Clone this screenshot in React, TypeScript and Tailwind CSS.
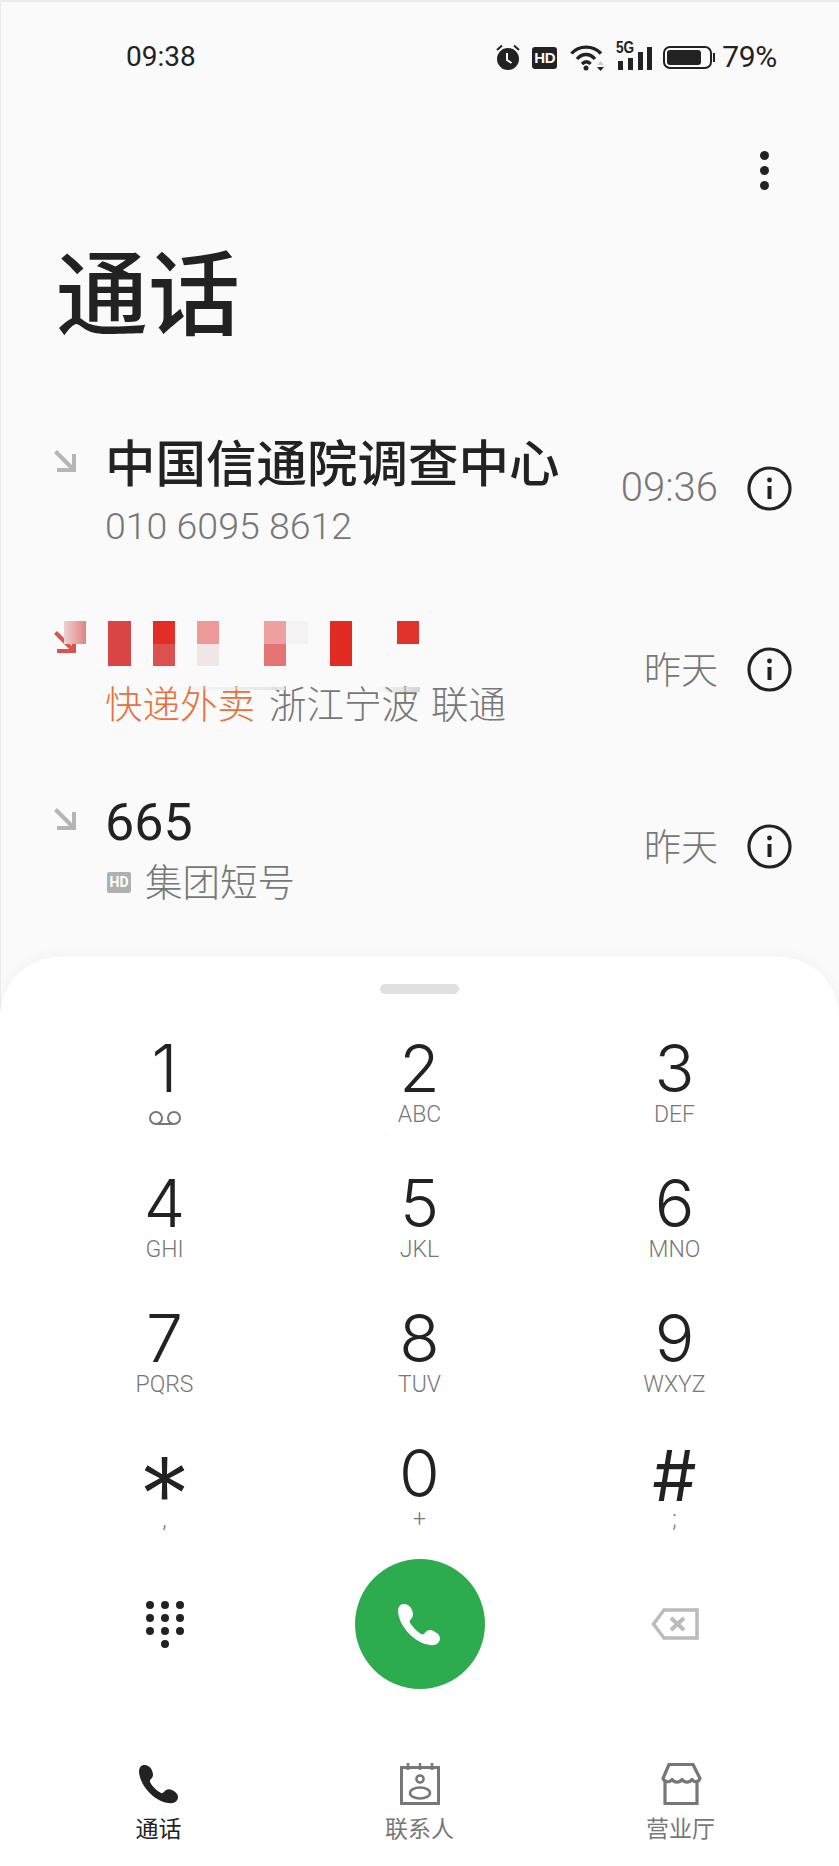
const CJK = "font-['Roboto','Noto_Sans_CJK_SC',sans-serif]";

const PHONE_PATH =
  "M5 1C2 1 0 4 0 8c1 14 16 30 30 31 5 1 9-2 9-6 0-3-2-5-6-7-3-1.500-6-1-8 2-1 1-2 1.500-3 1-4-2-9-7-11-11-.5-1 0-2 1-3 2-2 2.500-4 1.500-7C12 3 9 1 5 1Z";

function Phone({ className }: { className: string }) {
  return (
    <svg viewBox="0 0 40 40" className={className} fill="currentColor">
      <path d={PHONE_PATH} />
    </svg>
  );
}

function CallArrow({ className }: { className: string }) {
  return (
    <svg viewBox="0 0 22 22" className={className} fill="none" stroke="currentColor" strokeWidth="4">
      <path d="M1.500 1.500 19 19" />
      <path d="M20 4v16H3" />
    </svg>
  );
}

function InfoIcon() {
  return (
    <svg viewBox="0 0 45 45" className="w-[45px] h-[45px] text-[#222]" fill="none" stroke="currentColor">
      <circle cx="22.5" cy="22.500" r="20.500" strokeWidth="3.2" />
      <circle cx="22.5" cy="14" r="2.400" fill="currentColor" stroke="none" />
      <path d="M22.5 20v13" strokeWidth="4" />
    </svg>
  );
}

function StatusIcons() {
  return (
    <div className="flex items-center text-[#222]">
      <svg viewBox="0 0 24 26" className="w-[24px] h-[26px]">
        <circle cx="12" cy="15" r="11" fill="currentColor" />
        <path d="M11 9v7l4.500 3" fill="none" stroke="#fafafa" strokeWidth="2" />
        <path d="M1 6l5-4.500M23 6l-5-4.500" fill="none" stroke="currentColor" strokeWidth="2" />
      </svg>
      <div className="ml-[12px] w-[25px] h-[22px] rounded-[3px] bg-[#222] text-[#fafafa] text-[15px] font-bold leading-[22px] text-center mt-[1px] font-['Liberation_Sans',sans-serif] tracking-[-0.5px]">
        HD
      </div>
      <svg viewBox="0 0 35 27" className="ml-[13px] w-[35px] h-[27px]" fill="none" stroke="currentColor" strokeWidth="3.400">
        <path d="M1.500 9.500C9 1 23 1 31 9.500" />
        <path d="M7 15C12 9 20 9 25 15" />
        <path d="M12 20c3-3 6-3 8.500 0" />
        <circle cx="16" cy="24" r="2.500" fill="currentColor" stroke="none" />
        <path d="M27 21h7l-3.500-4Z" fill="#ccc" stroke="none" />
        <path d="M27 23h7l-3.500 4Z" fill="currentColor" stroke="none" />
      </svg>
      <div className="relative ml-[11px] w-[36px] h-[26px] flex items-end justify-between">
        <span className="absolute left-0 top-[-4px] text-[16px] font-bold leading-[16px] scale-x-[0.85] origin-left font-['Liberation_Sans',sans-serif]">
          5G
        </span>
        <span className="ml-[2px] w-[5px] h-[9px] bg-[#222]" />
        <span className="w-[5px] h-[12px] bg-[#222]" />
        <span className="w-[5px] h-[18px] bg-[#222]" />
        <span className="w-[5px] h-[23px] bg-[#222]" />
      </div>
      <div className="ml-[11px] flex items-center">
        <div className="w-[49px] h-[23px] rounded-[7px] border-[2px] border-[#222] p-[2px]">
          <div className="w-[34px] h-full rounded-[3px] bg-[#222]" />
        </div>
        <div className="ml-[1px] w-[2px] h-[9px] bg-[#222]" />
      </div>
      <span className="ml-[7px] text-[30px] leading-[28px] font-normal tracking-[-0.3px]">79%</span>
    </div>
  );
}

const MOSAIC: { cell: string; color: string }[] = [
  { cell: "col-start-1 row-start-1", color: "bg-linear-to-r from-[#f0d0d0] to-[#dd8484]" },
  { cell: "col-start-3 row-start-1 row-span-2", color: "bg-[#d94545]" },
  { cell: "col-start-5 row-start-1", color: "bg-[#e22e26]" },
  { cell: "col-start-5 row-start-2", color: "bg-[#dd5050]" },
  { cell: "col-start-7 row-start-1", color: "bg-[#ee9a9a]" },
  { cell: "col-start-7 row-start-2", color: "bg-[#f1e6e6]" },
  { cell: "col-start-10 row-start-1", color: "bg-[#eda0a0]" },
  { cell: "col-start-10 row-start-2", color: "bg-[#e57474]" },
  { cell: "col-start-11 row-start-1", color: "bg-[#f4f2f2]" },
  { cell: "col-start-13 row-start-1 row-span-2", color: "bg-[#e22b22]" },
  { cell: "col-start-16 row-start-1", color: "bg-[#e3312b]" },
];

function Mosaic() {
  // redaction blocks laid over the caller name, plus the smudge they leave on the line below
  return (
    <>
      <div className="absolute left-[64px] top-[5px] grid grid-cols-[repeat(16,22.2px)] grid-rows-[22.5px_22.5px]">
        {MOSAIC.map((m) => (
          <div key={m.cell} className={`${m.cell} ${m.color}`} />
        ))}
      </div>
      <div className="absolute left-[165px] top-[71px] w-[120px] h-[3px] bg-linear-to-r from-transparent to-[#e4e4e4]" />
      <div className="absolute left-[376px] top-[71px] w-[44px] h-[5px] bg-linear-to-r from-transparent to-[#d4d4d4]" />
    </>
  );
}

function CallRow({
  arrow,
  title,
  sub,
  time,
  timeSize,
  className,
}: {
  arrow: string;
  title: React.ReactNode;
  sub: React.ReactNode;
  time: string;
  timeSize: string;
  className: string;
}) {
  return (
    <div className={`relative flex items-center pr-[47px] ${className}`}>
      <div className="w-[105px] pl-[54px] self-start h-[60px] pt-[15px]">
        <CallArrow className={`w-[22px] h-[22px] ${arrow}`} />
      </div>
      <div className="flex-1 min-w-0">
        <div className="h-[60px] flex items-center text-[#222]">{title}</div>
        <div className="mt-[6px] h-[50px] flex items-center text-[#777] text-[37.5px] font-light whitespace-nowrap">
          {sub}
        </div>
      </div>
      <div className="flex items-center mb-[10px]">
        <span className={`text-[#777] font-light mr-[29px] ${timeSize}`}>{time}</span>
        <InfoIcon />
      </div>
    </div>
  );
}

const KEYS: { d: string; s?: string; big?: string }[] = [
  { d: "1" },
  { d: "2", s: "ABC" },
  { d: "3", s: "DEF" },
  { d: "4", s: "GHI" },
  { d: "5", s: "JKL" },
  { d: "6", s: "MNO" },
  { d: "7", s: "PQRS" },
  { d: "8", s: "TUV" },
  { d: "9", s: "WXYZ" },
  { d: "*", s: ",", big: "text-[104px] leading-none pt-[44px]" },
  { d: "0", s: "+" },
  { d: "#", s: ";", big: "text-[70px] leading-[64px] font-normal pt-[6px]" },
];

function Key({ d, s, big }: { d: string; s?: string; big?: string }) {
  return (
    <div className="flex flex-col items-center">
      <div className={`h-[64px] flex items-center font-['Inter',sans-serif] font-light text-[#222] ${big ?? "text-[66px] leading-[64px]"}`}>
        {d}
      </div>
      {s ? (
        <div className="mt-[2px] h-[26px] leading-[26px] text-[23px] font-light text-[#777]">{s}</div>
      ) : (
        <svg viewBox="0 0 32 14" className="mt-[11px] w-[32px] h-[14px] text-[#777]" fill="none" stroke="currentColor" strokeWidth="2">
          <circle cx="7" cy="7" r="6" />
          <circle cx="25" cy="7" r="6" />
          <path d="M7 13h18" />
        </svg>
      )}
    </div>
  );
}

function DialPadIcon() {
  return (
    <div className="grid grid-cols-[repeat(3,8px)] gap-x-[7px] gap-y-[5px] justify-center">
      {["a", "b", "c", "d", "e", "f", "g", "h", "i"].map((k) => (
        <span key={k} className="w-[8px] h-[8px] rounded-full bg-[#222]" />
      ))}
      <span className="col-start-2 w-[8px] h-[8px] rounded-full bg-[#222]" />
    </div>
  );
}

function BackspaceIcon() {
  return (
    <svg viewBox="0 0 48 32" className="w-[48px] h-[32px] text-[#bbb]" fill="none" stroke="currentColor" strokeWidth="3.500">
      <path d="M13 2h33v28H13L2.500 16Z" />
      <path d="M20 10l13 12M33 10 20 22" strokeWidth="4" />
    </svg>
  );
}

function ContactsIcon() {
  return (
    <svg viewBox="0 0 40 42" className="w-[40px] h-[42px] text-[#777]" fill="none" stroke="currentColor" strokeWidth="3">
      <path d="M1.500 4.500h37v36h-37Z" />
      <path d="M8 0v7M20 0v7M32 0v7" strokeWidth="2.500" />
      <circle cx="20" cy="16" r="3.600" strokeWidth="2.500" />
      <ellipse cx="20" cy="30" rx="10" ry="5.500" strokeWidth="2.500" />
    </svg>
  );
}

function StoreIcon() {
  return (
    <svg viewBox="0 0 42 42" className="w-[42px] h-[42px] text-[#777]" fill="none" stroke="currentColor" strokeWidth="3.200">
      <path d="M9 1.500h24l7 14c-1 3-5 5-8 1-2 3-7 4-10 0-3 4-8 3-10 0-3 4-8 2-9-1Z" strokeLinejoin="round" />
      <path d="M5 18v22.500h32V18" />
    </svg>
  );
}

function NavItem({ label, active, children }: { label: string; active?: boolean; children: React.ReactNode }) {
  return (
    <div className="flex flex-col items-center">
      <div className="h-[42px] flex items-center">{children}</div>
      <div className={`mt-[12px] h-[26px] leading-[26px] text-[23px] ${active ? "text-[#222]" : "text-[#777]"}`}>{label}</div>
    </div>
  );
}

export default function App() {
  return (
    <div className={`w-[839px] h-[1866px] flex flex-col bg-[#fafafa] overflow-hidden shadow-[inset_1px_2px_0_#ececec] ${CJK}`}>
      <div className="h-[112px] shrink-0 flex items-center justify-between pt-[2px] pl-[126px] pr-[62px] text-[#222]">
        <span className="text-[28px] leading-none">09:38</span>
        <StatusIcons />
      </div>

      <div className="h-[116px] shrink-0 flex flex-col items-end justify-center gap-[6px] pr-[70px]">
        <span className="w-[9px] h-[9px] rounded-full bg-[#222]" />
        <span className="w-[9px] h-[9px] rounded-full bg-[#222]" />
        <span className="w-[9px] h-[9px] rounded-full bg-[#222]" />
      </div>

      <div className="h-[132px] shrink-0 leading-[138px] pl-[56px] text-[92px] font-medium text-[#222]">通话</div>

      <div className="mt-[75px] flex flex-col">
        <CallRow
          arrow="text-[#b5b5b5]"
          title={<span className="text-[50.5px] font-medium whitespace-nowrap">中国信通院调查中心</span>}
          sub={<span className="text-[37.5px]">010 6095 8612</span>}
          time="09:36"
          timeSize="text-[40px]"
          className="h-[116px]"
        />
        <CallRow
          arrow="text-[#d9534f]"
          title={<Mosaic />}
          sub={
            <span className="flex mb-[4px]">
              <span className="text-[#e8703a]">快递外卖</span>
              <span className="ml-[14px]">浙江宁波</span>
              <span className="ml-[12px]">联通</span>
            </span>
          }
          time="昨天"
          timeSize="text-[37px] pt-[6px]"
          className="h-[116px] mt-[65px]"
        />
        <CallRow
          arrow="text-[#b5b5b5]"
          title={<span className="text-[52px]">665</span>}
          sub={
            <span className="flex items-center mb-[2px]">
              <span className="ml-[2px] w-[24px] h-[21px] rounded-[2px] bg-[#b0b0b0] text-white text-[14px] font-bold leading-[21px] text-center mr-[14px] -mt-[2px]">
                HD
              </span>
              集团短号
            </span>
          }
          time="昨天"
          timeSize="text-[37px] pt-[6px]"
          className="h-[116px] mt-[61px]"
        />
      </div>

      <div className="mt-auto h-[909px] shrink-0 rounded-t-[60px] bg-white shadow-[0_-3px_14px_rgba(0,0,0,0.03)] flex flex-col items-center pt-[27px]">
        <div className="w-[79px] h-[10px] rounded-full bg-[#e0e0e0]" />
        <div className="mt-[42px] w-full px-[37px] grid grid-cols-3 grid-rows-[135px_135px_135px_118px]">
          {KEYS.map((k) => (
            <Key key={k.d} {...k} />
          ))}
        </div>
        <div className="w-full px-[37px] grid grid-cols-3 items-center h-[130px]">
          <DialPadIcon />
          <div className="justify-self-center w-[130px] h-[130px] rounded-full bg-[#2dab4f] flex items-center justify-center">
            <Phone className="w-[43px] h-[43px] text-white" />
          </div>
          <div className="justify-self-center">
            <BackspaceIcon />
          </div>
        </div>
        <div className="mt-[74px] w-full px-[28px] grid grid-cols-3">
          <NavItem label="通话" active>
            <Phone className="w-[40px] h-[40px] text-[#222]" />
          </NavItem>
          <NavItem label="联系人">
            <ContactsIcon />
          </NavItem>
          <NavItem label="营业厅">
            <StoreIcon />
          </NavItem>
        </div>
      </div>
    </div>
  );
}
